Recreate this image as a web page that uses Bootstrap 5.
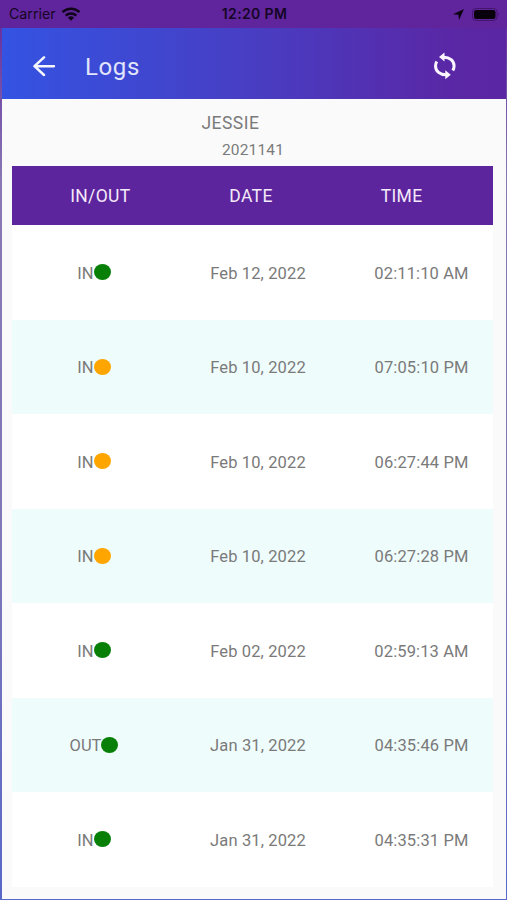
<!DOCTYPE html>
<html lang="en">
<head>
<meta charset="utf-8">
<meta name="viewport" content="width=device-width, initial-scale=1">
<title>Logs</title>
<link href="https://cdn.jsdelivr.net/npm/bootstrap@5.3.0/dist/css/bootstrap.min.css" rel="stylesheet">
<style>
  body { font-family: Roboto, "Liberation Sans", sans-serif; background: #fafafa; color: #7a7a7a; }
  .phone { height: 900px; background: linear-gradient(#61259c, #8878b4 20%, #8078b8 60%, #5868c8); padding: 0 1px 1px 2px; }
  .status { height: 28px; margin: 0 -1px 0 -2px; padding: 0 7px 0 9px; background: #60259c; color: #150625; font-family: Inter, sans-serif; font-size: 14.2px; line-height: 28px; }
  .status > * { flex: 1 1 0; }
  .clock { font-weight: 600; font-size: 14px; letter-spacing: .35px; }
  .appbar { height: 71px; background: linear-gradient(90deg, #3453e2, #4640c6 45%, #5a27a5 90%, #5b26a3); padding-left: 29px; padding-right: 48px; }
  .title { font-size: 24px; letter-spacing: .6px; color: #e2e5fb; margin-left: 30px; line-height: 1; padding-top: 7px; }
  .screen { background: #fafafa; }
  .owner { height: 67px; }
  .owner-name { font-size: 17.5px; line-height: 20px; padding-top: 14px; margin-left: 199.5px; letter-spacing: .45px; }
  .owner-id { font-size: 15.5px; line-height: 20px; padding-top: 7px; margin-left: 220px; letter-spacing: .15px; }
  .logs { width: 481px; margin-left: 10px; }
  .logs-head { height: 59px; background: #5d259d; color: #f4eafa; font-size: 17.5px; letter-spacing: .35px; padding: 2px 16px 0 13px; }
  .log { display: grid; grid-template-columns: 164px 164px 163px; height: 94.5px; align-items: center; background: #fff; font-size: 16.5px; text-align: center; }
  .log > * { padding-top: 4px; white-space: nowrap; }
  .log > :not(:first-child) { letter-spacing: .13px; }
  .log:nth-child(odd) { background: #effcfc; }
  .dot { width: 17px; height: 16px; border-radius: 50%; margin-top: -4px; }
  .on-time { background: #088008; }
  .late { background: #ffa500; }
</style>
<script src="https://cdn.jsdelivr.net/npm/bootstrap@5.3.0/dist/js/bootstrap.bundle.min.js"></script>
</head>
<body>
<div class="phone d-flex flex-column overflow-hidden">
  <div class="status d-flex align-items-center">
    <div class="d-flex align-items-center"><span>Carrier</span>
      <svg class="ms-1" width="22" height="14" viewBox="-1 0 22 14" fill="none" stroke="#100418" stroke-width="2.500"><path d="M1.500 5.200a12.200 12.200 0 0 1 17 0"/><path d="M4.700 8.700a7.700 7.700 0 0 1 10.600 0"/><path d="M10 13.800 6.900 10.700a4.600 4.600 0 0 1 6.200 0Z" fill="#100418" stroke="none"/></svg>
    </div>
    <div class="clock text-center">12:20 PM</div>
    <div class="d-flex justify-content-end align-items-center">
      <svg width="11" height="11" viewBox="0 0 11 11"><path d="M11 0 6 11 5.4 5.8 0 5.2Z" fill="#0c0312"/></svg>
      <svg class="ms-2" width="28" height="13" viewBox="0 0 28 13"><rect x=".5" y=".5" width="24.500" height="12" rx="3.500" fill="none" stroke="#43166c"/><rect x="2" y="2" width="21.500" height="9" rx="2.200" fill="#08010c"/><path d="M26.300 4.300q1.600 2.200 0 4.400Z" fill="#43166c"/></svg>
    </div>
  </div>
  <header class="appbar d-flex align-items-center flex-shrink-0">
    <svg class="mt-1" width="24" height="22" viewBox="0 0 24 22" fill="none" stroke="#f5f7ff" stroke-width="2.500" stroke-linecap="round" stroke-linejoin="round"><path d="M23 11.200H3.500M13 2.400 3.500 11.200l9.500 8.800"/></svg>
    <div class="title">Logs</div>
    <svg class="ms-auto mt-1" width="26" height="30" viewBox="0 0 26 30" fill="none" stroke="#fbf5ff" stroke-width="3"><path d="M12 6.200c5.600 0 10.100 3.700 10.100 8.900q0 2.300-1.300 4.400"/><path d="M14 23.800C8 23.800 3.500 20.200 3.500 15q0-2.300 1.300-4.500"/><path d="M12.500 1.500v9L7 6ZM13.300 19.300v9l5.500-4.500Z" fill="#fbf5ff" stroke="none"/></svg>
  </header>
  <main class="screen flex-grow-1">
    <div class="owner">
      <div class="owner-name">JESSIE</div>
      <div class="owner-id">2021141</div>
    </div>
    <div class="logs overflow-hidden">
      <div class="logs-head d-flex align-items-center text-center">
        <div class="col-4">IN/OUT</div><div class="col-4">DATE</div><div class="col-4">TIME</div>
      </div>
      <div class="log"><div class="d-flex justify-content-center align-items-center">IN<span class="dot on-time"></span></div><div>Feb 12, 2022</div><div>02:11:10 AM</div></div>
      <div class="log"><div class="d-flex justify-content-center align-items-center">IN<span class="dot late"></span></div><div>Feb 10, 2022</div><div>07:05:10 PM</div></div>
      <div class="log"><div class="d-flex justify-content-center align-items-center">IN<span class="dot late"></span></div><div>Feb 10, 2022</div><div>06:27:44 PM</div></div>
      <div class="log"><div class="d-flex justify-content-center align-items-center">IN<span class="dot late"></span></div><div>Feb 10, 2022</div><div>06:27:28 PM</div></div>
      <div class="log"><div class="d-flex justify-content-center align-items-center">IN<span class="dot on-time"></span></div><div>Feb 02, 2022</div><div>02:59:13 AM</div></div>
      <div class="log"><div class="d-flex justify-content-center align-items-center">OUT<span class="dot on-time"></span></div><div>Jan 31, 2022</div><div>04:35:46 PM</div></div>
      <div class="log"><div class="d-flex justify-content-center align-items-center">IN<span class="dot on-time"></span></div><div>Jan 31, 2022</div><div>04:35:31 PM</div></div>
    </div>
  </main>
</div>
</body>
</html>
